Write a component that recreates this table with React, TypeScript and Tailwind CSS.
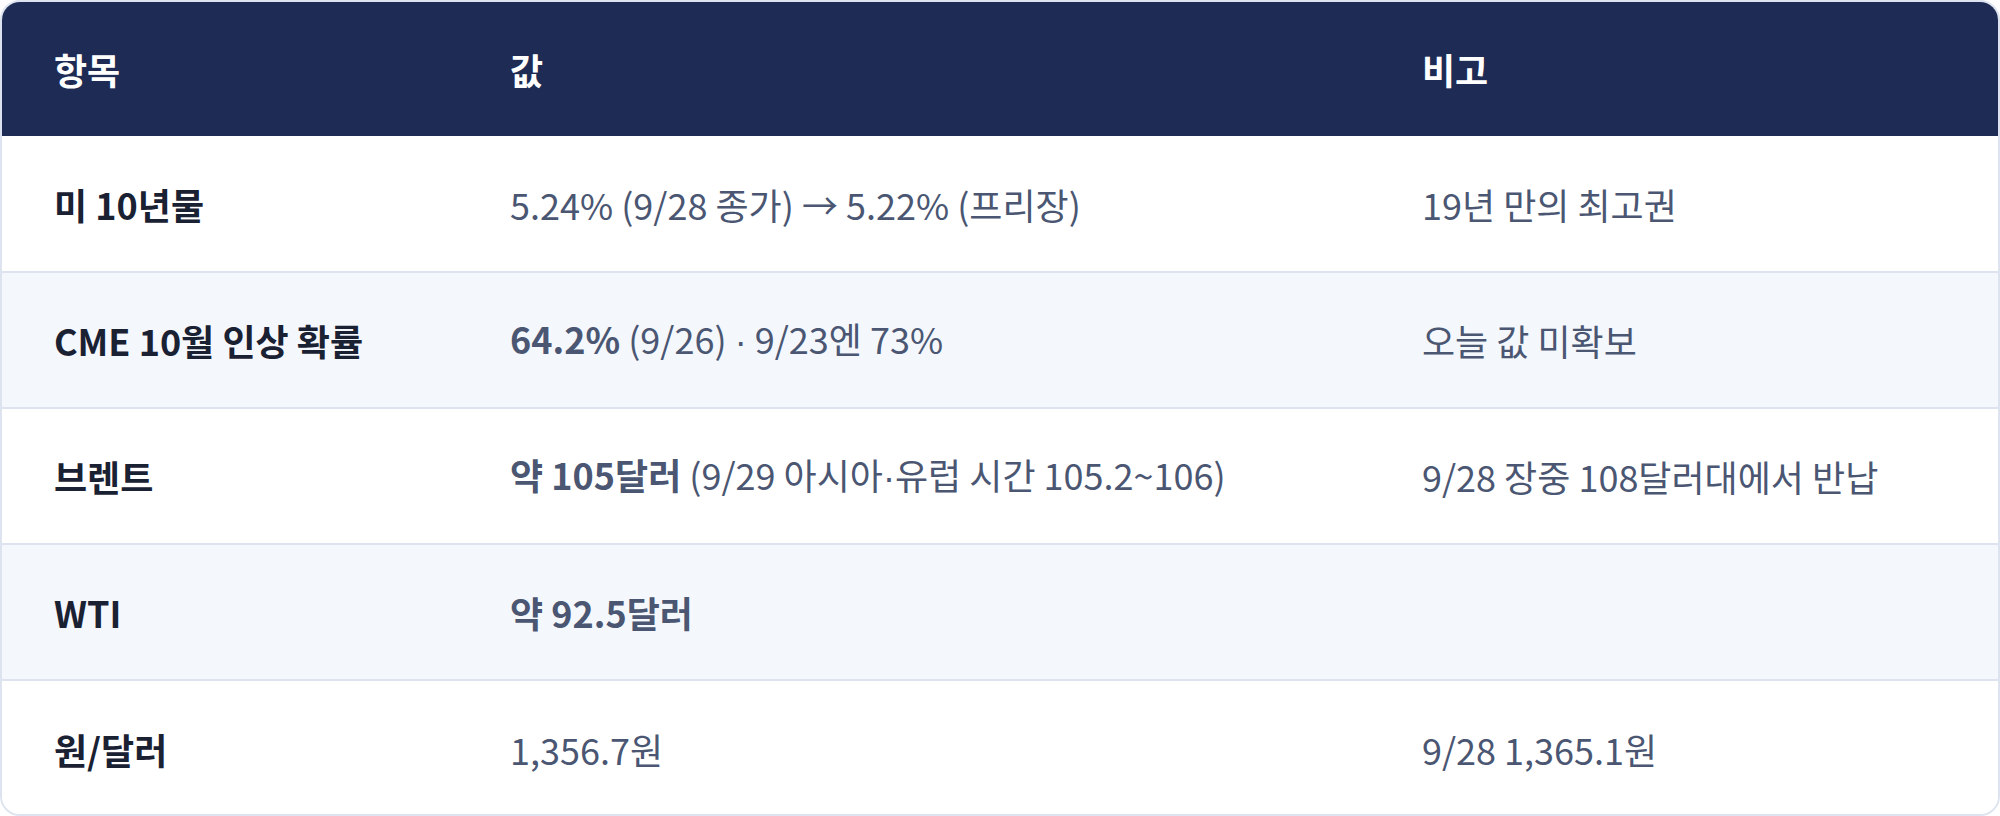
const Sym = ({ children }: { children: string }) => (
  <span className="font-['Liberation_Sans',sans-serif]">{children}</span>
);

const rows = [
  {
    label: "미 10년물",
    value: <>5.24% (9/28 종가) → 5.22% (프리장)</>,
    note: "19년 만의 최고권",
  },
  {
    label: "CME 10월 인상 확률",
    value: (
      <>
        <b className="font-bold">64.2%</b> (9/26) <Sym>·</Sym> 9/23엔 73%
      </>
    ),
    note: "오늘 값 미확보",
  },
  {
    label: "브렌트",
    value: (
      <>
        <b className="font-bold">약 105달러</b> (9/29 아시아<Sym>·</Sym>유럽 시간 105.2~106)
      </>
    ),
    note: "9/28 장중 108달러대에서 반납",
  },
  {
    label: "WTI",
    value: <b className="font-bold">약 92.5달러</b>,
    note: "",
  },
  {
    label: "원/달러",
    value: <>1,356.7원</>,
    note: "9/28 1,365.1원",
  },
];

export default function App() {
  return (
    <div className="w-[2000px] h-[816px] bg-white font-['Noto_Sans_CJK_KR',sans-serif]">
      <div className="h-full overflow-hidden rounded-[20px] border-2 border-[#dde4f0]">
        <table className="w-full table-fixed border-collapse text-[36px] leading-[48px]">
          <colgroup>
            <col className="w-[456px]" />
            <col className="w-[912px]" />
            <col />
          </colgroup>
          <thead>
            <tr className="h-[134px] bg-[#1e2b55] text-left text-white">
              <th className="pl-[52px] font-bold">항목</th>
              <th className="pl-[52px] font-bold">값</th>
              <th className="pl-[52px] font-bold">비고</th>
            </tr>
          </thead>
          <tbody>
            {rows.map((row, i) => (
              <tr
                key={row.label}
                className={`h-[136px] ${i > 0 ? "border-t-2 border-[#dde4f0]" : ""} ${
                  i % 2 === 1 ? "bg-[#f4f7fc]" : "bg-white"
                }`}
              >
                <td className="pl-[52px] font-bold text-[#1a2133]">{row.label}</td>
                <td className="pl-[52px] text-[#4a5672]">{row.value}</td>
                <td className="pl-[52px] text-[#4a5672]">{row.note}</td>
              </tr>
            ))}
          </tbody>
        </table>
      </div>
    </div>
  );
}
